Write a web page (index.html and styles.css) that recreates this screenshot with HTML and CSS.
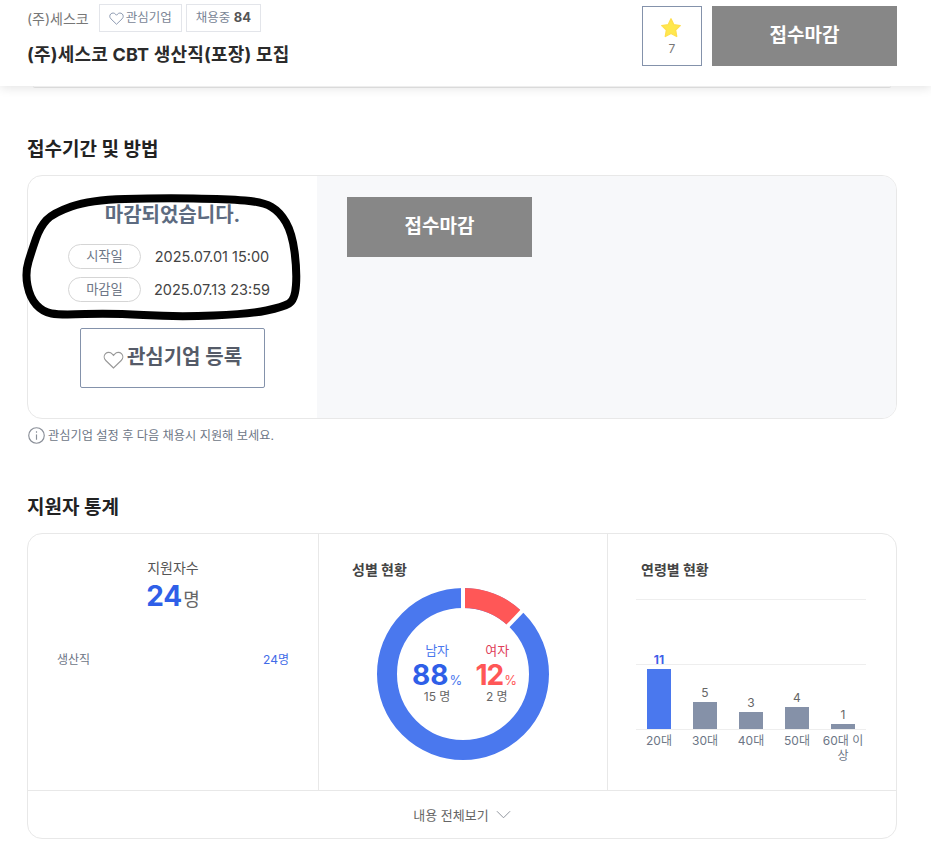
FILE: index.html
```html
<!DOCTYPE html>
<html lang="ko">
<head>
<meta charset="utf-8">
<title>(주)세스코 CBT 생산직(포장) 모집</title>
<link rel="stylesheet" href="styles.css">
</head>
<body>
<header class="top">
  <div class="top-info">
    <div class="top-row">
      <span class="company">(주)세스코</span>
      <span class="chip"><svg class="heart-s" viewBox="0 0 16 14"><path d="M8 13.2 2 7.4C.4 5.8.4 3.5 1.8 2.1c1.5-1.4 3.8-1.3 5.1.2L8 3.5l1.1-1.2c1.3-1.5 3.6-1.6 5.1-.2 1.4 1.4 1.4 3.7-.2 5.3z"/></svg>관심기업</span>
      <span class="chip">채용중&nbsp;<b>84</b></span>
    </div>
    <h1 class="title">(주)세스코 CBT 생산직(포장) 모집</h1>
  </div>
  <div class="top-actions">
    <div class="star-box">
      <svg class="star" viewBox="0 0 20 20"><path d="M10 1.6 12.6 7l5.8.8-4.2 4.1 1 5.8L10 15l-5.2 2.7 1-5.8L1.6 7.800l5.800-.8z"/></svg>
      <span>7</span>
    </div>
    <div class="closed-btn">접수마감</div>
  </div>
</header>

<main class="page">
  <div class="prev-card"></div>

  <h2 class="sec-title first">접수기간 및 방법</h2>
  <section class="card apply">
    <div class="apply-left">
      <p class="closed-msg">마감되었습니다.</p>
      <dl class="dates">
        <div class="date-row"><dt>시작일</dt><dd>2025.07.01 15:00</dd></div>
        <div class="date-row"><dt>마감일</dt><dd>2025.07.13 23:59</dd></div>
      </dl>
      <div class="fav-btn"><svg class="heart-l" viewBox="0 0 16 14"><path d="M8 13.200 2 7.400C.4 5.800.4 3.500 1.800 2.100c1.500-1.400 3.800-1.300 5.100.2L8 3.500l1.100-1.200c1.300-1.500 3.600-1.600 5.100-.2 1.400 1.400 1.400 3.700-.2 5.300z"/></svg>관심기업 등록</div>
    </div>
    <div class="apply-right">
      <div class="closed-btn">접수마감</div>
    </div>
  </section>
  <p class="note">
    <svg class="info" viewBox="0 0 16 16"><circle cx="8" cy="8" r="7.300"/><path d="M8 7v5"/><path d="M8 4v1.400"/></svg>
    관심기업 설정 후 다음 채용시 지원해 보세요.
  </p>

  <h2 class="sec-title second">지원자 통계</h2>
  <section class="card stats">
    <div class="stats-grid">
      <div class="col col-total">
        <div class="total-label">지원자수</div>
        <div class="total-value"><strong>24</strong>명</div>
        <div class="job-row"><span>생산직</span><span class="job-count">24명</span></div>
      </div>
      <div class="col col-gender">
        <h3 class="col-title">성별 현황</h3>
        <div class="donut">
          <svg viewBox="0 0 172 172">
            <circle class="ring-blue" cx="86" cy="86" r="76"/>
            <path class="ring-red" d="M86 10A76 76 0 0 1 138 30.600"/>
            <path class="ring-gap" d="M86 30V-4"/>
            <path class="ring-gap" d="M126 43 148.500 19.500"/>
          </svg>
          <div class="donut-text">
            <div class="gender male">
              <span class="g-label">남자</span>
              <span class="g-pct"><b>88</b><i>%</i></span>
              <span class="g-num">15 명</span>
            </div>
            <div class="gender female">
              <span class="g-label">여자</span>
              <span class="g-pct"><b>12</b><i>%</i></span>
              <span class="g-num">2 명</span>
            </div>
          </div>
        </div>
      </div>
      <div class="col col-age">
        <h3 class="col-title">연령별 현황</h3>
        <div class="chart">
          <div class="bar-col top-val"><span class="val">11</span><span class="bar" style="height:60px"></span></div>
          <div class="bar-col"><span class="val">5</span><span class="bar" style="height:27px"></span></div>
          <div class="bar-col"><span class="val">3</span><span class="bar" style="height:17px"></span></div>
          <div class="bar-col"><span class="val">4</span><span class="bar" style="height:22px"></span></div>
          <div class="bar-col"><span class="val">1</span><span class="bar" style="height:5px"></span></div>
        </div>
        <div class="labels">
          <span>20대</span><span>30대</span><span>40대</span><span>50대</span><span>60대 이상</span>
        </div>
      </div>
    </div>
    <div class="more">내용 전체보기<svg class="chev" viewBox="0 0 16 9"><path d="M1 1l7 7 7-7"/></svg></div>
  </section>
</main>

<svg class="scribble" viewBox="0 0 931 842">
  <path d="M125 199Q160 198 193.500 198.500Q227 199 245 200.500Q263 202 271.500 207Q280 212 286 222.500Q292 233 294.500 251.500Q297 270 296 285Q295 300 289 303.500Q283 307 266.500 310.500Q250 314 213.500 315.500Q177 317 143.500 315Q110 313 85 314Q60 315 51.500 313.500Q43 312 36.500 305Q30 298 27.500 285.500Q25 273 28.500 261.500Q32 250 36 238.500Q40 227 46.500 220Q53 213 71.500 206.500Q90 200 125 199Z"/>
</svg>
</body>
</html>
```
FILE: styles.css
```css
* { box-sizing: border-box; }
html, body { margin: 0; padding: 0; }
body {
  width: 931px;
  height: 842px;
  overflow: hidden;
  position: relative;
  background: #fff;
  color: #333;
  font-family: Inter, "Noto Sans CJK KR", sans-serif;
  font-size: 14px;
}
h1, h2, h3, p, dl, dd { margin: 0; }

/* top bar */
.top {
  position: relative;
  z-index: 2;
  height: 86px;
  padding: 4px 34px 0 27px;
  display: flex;
  justify-content: space-between;
  background: #fff;
  box-shadow: 0 2px 10px rgba(0, 0, 0, .11);
}
.top-row { display: flex; align-items: center; gap: 4px; height: 28px; }
.company { font-size: 14px; color: #777; margin-right: 6px; }
.chip {
  display: inline-flex;
  align-items: center;
  height: 28px;
  padding: 0 9px 3px;
  border: 1px solid #e3e5ea;
  font-size: 12.500px;
  color: #7a8596;
}
.chip b { color: #555; font-size: 13px; }
.heart-s { width: 15px; height: 13px; margin: 3px 2px 0 0; fill: none; stroke: #8492ab; stroke-width: 1; }
.title {
  margin-top: 12px;
  font-size: 18px;
  letter-spacing: .2px;
  line-height: 22px;
  font-weight: 700;
  color: #2b2b2b;
}
.top-actions { display: flex; gap: 10px; padding-top: 2px; }
.star-box {
  width: 60px;
  height: 60px;
  border: 1px solid #8492ab;
  display: flex;
  flex-direction: column;
  align-items: center;
  padding-top: 10px;
  font-size: 12px;
  color: #777;
}
.star { width: 22px; height: 22px; margin-right: 2px; margin-bottom: 2px; fill: #ffe84d; stroke: #ffdf4d; stroke-width: 1.200; stroke-linejoin: round; }
.closed-btn {
  width: 185px;
  height: 60px;
  padding-bottom: 5px;
  background: #878787;
  color: #fff;
  font-size: 19px;
  font-weight: 700;
  display: flex;
  align-items: center;
  justify-content: center;
}

/* page */
.page { padding: 0 34px 0 27px; }
.prev-card {
  height: 2px;
  margin: 0 6px;
  border-bottom: 1px solid #e8e8e8;
  border-radius: 0 0 8px 8px;
}
.sec-title { font-size: 19px; line-height: 26px; font-weight: 700; color: #222; }
.sec-title.first { margin-top: 49px; }
.sec-title.second { margin-top: 50px; }
.card {
  margin-top: 12px;
  border: 1px solid #e8e8e8;
  border-radius: 15px;
  overflow: hidden;
}

/* apply */
.apply { display: flex; height: 244px; }
.apply-left {
  width: 289px;
  padding-top: 26px;
  display: flex;
  flex-direction: column;
  align-items: center;
}
.closed-msg { font-size: 20px; line-height: 26px; font-weight: 700; color: #5d6b80; }
.dates { margin: 16px 5px 0 0; display: flex; flex-direction: column; gap: 8px; }
.date-row { display: flex; align-items: center; gap: 11px; height: 25px; }
.date-row dt {
  width: 73px;
  height: 25px;
  border: 1px solid #d5d5d5;
  border-radius: 13px;
  text-align: center;
  line-height: 23px;
  font-size: 13.300px;
  color: #6d7686;
}
.date-row dd { font-size: 14.500px; color: #444; width: 120px; text-align: center; white-space: nowrap; }
.fav-btn {
  margin-top: 26px;
  width: 185px;
  height: 60px;
  padding-bottom: 5px;
  border: 1px solid #8492ab;
  border-radius: 2px;
  display: flex;
  align-items: center;
  justify-content: center;
  font-size: 20px;
  font-weight: 700;
  color: #555b68;
}
.heart-l { width: 21px; height: 18px; margin: 8px 3px 0 0; fill: none; stroke: #999; stroke-width: .9; }
.apply-right { flex: 1; background: #f7f8fa; padding: 21px 30px; }
.note {
  margin-top: 6px;
  display: flex;
  align-items: center;
  gap: 3px;
  height: 20px;
  font-size: 12.200px;
  color: #6d7686;
}
.info { width: 17px; height: 17px; margin-left: 1px; fill: none; stroke: #8a8f98; stroke-width: 1.100; }

/* stats */
.stats-grid {
  display: grid;
  grid-template-columns: 291px 289px 1fr;
  height: 257px;
  border-bottom: 1px solid #e8e8e8;
}
.col { border-right: 1px solid #e8e8e8; }
.col:last-child { border-right: 0; }
.col-total { padding: 24px 29px 0; text-align: center; }
.total-label { font-size: 14px; line-height: 20px; color: #555; }
.total-value { margin-top: 2px; font-size: 18px; line-height: 32px; color: #666; }
.total-value strong { font-size: 28px; font-weight: 700; color: #2f5fe8; margin-right: 1px; }
.job-row {
  margin-top: 35px;
  display: flex;
  justify-content: space-between;
  font-size: 12px;
  line-height: 18px;
  color: #6d7686;
}
.job-count { color: #3f6be8; }
.col-title { font-size: 14px; line-height: 20px; font-weight: 700; color: #444; }
.col-gender { padding: 26px 0 0 33px; }
.donut { position: relative; width: 172px; height: 172px; margin: 8px 0 0 25px; }
.donut svg { display: block; width: 172px; height: 172px; overflow: hidden; }
.ring-blue, .ring-red { fill: none; stroke-width: 20; }
.ring-blue { stroke: #4a78ee; }
.ring-red { stroke: #ff5757; }
.ring-gap { fill: none; stroke: #fff; stroke-width: 4; }
.donut-text {
  position: absolute;
  top: 53px;
  left: 35px;
  display: flex;
  width: 105px;
  justify-content: space-between;
}
.gender { display: flex; flex-direction: column; align-items: center; }
.g-label { font-size: 13px; line-height: 18px; }
.g-pct { margin-top: 2px; line-height: 28px; font-size: 28px; font-weight: 700; white-space: nowrap; }
.g-pct b { font-weight: 700; }
.g-pct i { font-style: normal; font-weight: 400; font-size: 13px; margin-left: 1px; }
.g-num { margin-top: -5px; font-size: 12px; line-height: 16px; color: #666; }
.male .g-label, .male .g-pct { color: #2f5fe8; }
.male .g-label, .male i { color: #4a78ee; }
.female .g-label, .female .g-pct { color: #ff5757; }
.female .g-label { color: #e0405a; margin-left: 2px; }
.female .g-num { margin-left: 1px; }
.female b { letter-spacing: -1px; }
.col-age { padding: 26px 30px 0 28px; }
.col-age .col-title { padding-left: 5px; }
.chart {
  position: relative;
  margin-top: 19px;
  height: 131px;
  border-top: 1px solid #eee;
  border-bottom: 1px solid #eee;
  display: grid;
  grid-template-columns: repeat(5, 46px);
}
.chart::before {
  content: "";
  position: absolute;
  left: 0;
  right: 0;
  top: 64px;
  border-top: 1px solid #eee;
}
.bar-col {
  position: relative;
  display: flex;
  flex-direction: column;
  align-items: center;
  justify-content: flex-end;
}
.val { font-size: 12px; line-height: 16px; margin-bottom: -1px; color: #666; }
.bar { width: 24px; background: #8591a8; display: block; margin-top: 2px; }
.top-val .val { color: #3f5fe8; font-weight: 700; }
.top-val .bar { background: #4a78ee; }
.labels {
  display: grid;
  grid-template-columns: repeat(5, 46px);
  margin-top: 3px;
  font-size: 12px;
  line-height: 15px;
  color: #6d7686;
  text-align: center;
}
.more {
  height: 47px;
  display: flex;
  align-items: center;
  justify-content: center;
  gap: 7px;
  font-size: 13px;
  color: #666;
}
.chev { width: 15px; height: 9px; fill: none; stroke: #8a8f98; stroke-width: 1; }

/* hand-drawn marker lying over the screenshot */
.scribble {
  position: absolute;
  left: 0;
  top: 0;
  width: 931px;
  height: 842px;
  z-index: 3;
  pointer-events: none;
  fill: none;
  stroke: #000;
  stroke-width: 8;
  stroke-linejoin: round;
}
```
